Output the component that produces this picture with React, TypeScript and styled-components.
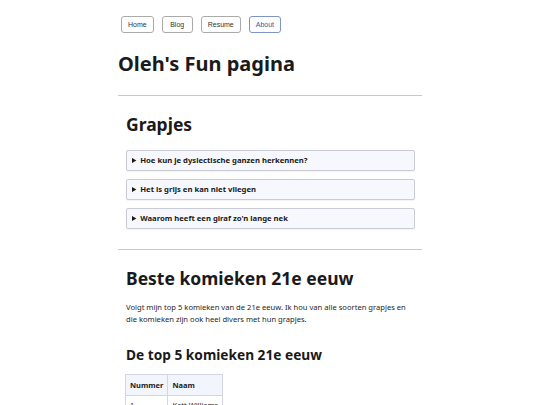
import React from 'react';
import styled, { createGlobalStyle } from 'styled-components';

const Global = createGlobalStyle`
  body {
    margin: 0;
    background: #fff;
    font-family: "Noto Sans", "Open Sans", sans-serif;
    color: #1c1c1c;
  }
`;

const Page = styled.div`
  width: 304px;
  margin: 0 auto;
  padding-top: 16px;
`;

const Nav = styled.nav`
  display: flex;
  gap: 8px;
  padding-left: 3px;
`;

const NavButton = styled.button<{ active?: boolean }>`
  height: 17px;
  min-width: 31px;
  padding: 0 6px;
  font-family: "Liberation Sans", Arial, sans-serif;
  font-size: 7px;
  color: ${p => (p.active ? '#3a5a9a' : '#333')};
  background: #fff;
  border: 1px solid ${p => (p.active ? '#7d95c4' : '#aaa')};
  border-radius: 3px;
`;

const Title = styled.h1`
  margin: 17px 0 17px;
  font-size: 20px;
  font-weight: 700;
  line-height: 28px;
  color: #1a1a1a;
`;

const Rule = styled.hr`
  margin: 0;
  border: none;
  border-top: 1px solid #c8c8c8;
`;

const Section = styled.section`
  padding: 17px 7px 20px 8px;
`;

const SectionTitle = styled.h2<{ size: number }>`
  margin: 0;
  font-size: ${p => p.size}px;
  font-weight: 700;
  line-height: 1.3;
  color: #1a1a1a;
`;

const Jokes = styled.div`
  display: flex;
  flex-direction: column;
  gap: 8px;
  margin-top: 14px;
`;

const Joke = styled.details`
  background: #f6f8fd;
  border: 1px solid #c9ccd6;
  border-radius: 2px;
  padding: 0 5px;
  box-shadow: 0 1px 1px rgba(0, 0, 0, 0.05);
`;

const Summary = styled.summary`
  height: 19px;
  line-height: 19px;
  font-size: 7.7px;
  font-weight: 700;
  color: #1a1a1a;
  cursor: pointer;
`;

const Text = styled.p`
  margin: 11px 0 0;
  font-size: 7.6px;
  line-height: 12px;
  color: #262626;
`;

const Sub = styled(SectionTitle)`
  margin-top: 21px;
`;

const Table = styled.table`
  margin: 11px 0 0 -1px;
  border-collapse: collapse;
  font-size: 7.5px;
  th, td {
    border: 1px solid #d3d6df;
    padding: 4px 4px;
    text-align: left;
  }
  th {
    background: #f3f5fc;
    font-weight: 700;
    padding: 5px 4px;
  }
`;

const jokes = [
  'Hoe kun je dyslectische ganzen herkennen?',
  'Het is grijs en kan niet vliegen',
  "Waarom heeft een giraf zo'n lange nek",
];

const comedians = ['Katt Williams', 'Kevin Hart', 'Bill Burr', 'Ali Wong', 'Chris Rock'];

export default function App() {
  return (
    <Page>
      <Global />
      <Nav>
        <NavButton>Home</NavButton>
        <NavButton>Blog</NavButton>
        <NavButton>Resume</NavButton>
        <NavButton active>About</NavButton>
      </Nav>
      <Title>Oleh's Fun pagina</Title>
      <Rule />
      <Section>
        <SectionTitle size={17.5}>Grapjes</SectionTitle>
        <Jokes>
          {jokes.map(j => (
            <Joke key={j}>
              <Summary>{j}</Summary>
            </Joke>
          ))}
        </Jokes>
      </Section>
      <Rule />
      <Section>
        <SectionTitle size={17.5}>Beste komieken 21e eeuw</SectionTitle>
        <Text>
          Volgt mijn top 5 komieken van de 21e eeuw. Ik hou van alle soorten grapjes en die komieken
          zijn ook heel divers met hun grapjes.
        </Text>
        <Sub size={13.7}>De top 5 komieken 21e eeuw</Sub>
        <Table>
          <thead>
            <tr>
              <th>Nummer</th>
              <th>Naam</th>
            </tr>
          </thead>
          <tbody>
            {comedians.map((c, i) => (
              <tr key={c}>
                <td>{i + 1}</td>
                <td>{c}</td>
              </tr>
            ))}
          </tbody>
        </Table>
      </Section>
    </Page>
  );
}
